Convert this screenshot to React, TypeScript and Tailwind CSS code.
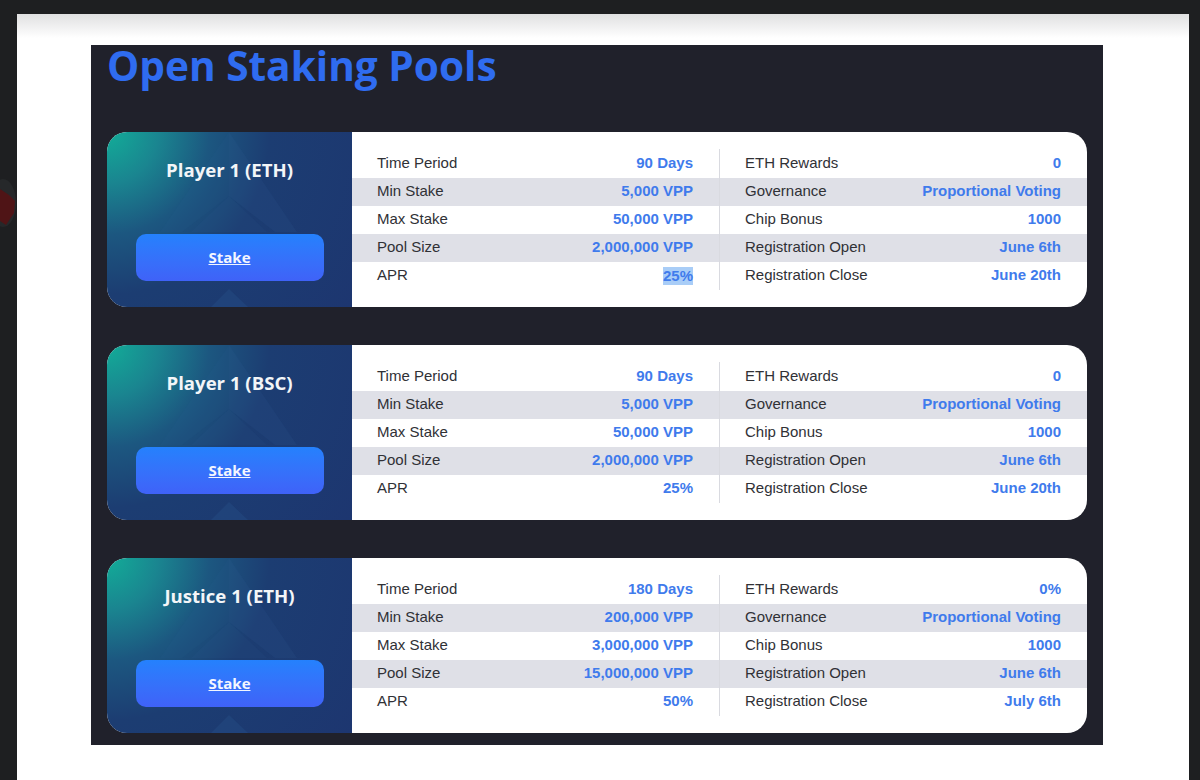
const LEFT = ["Time Period", "Min Stake", "Max Stake", "Pool Size", "APR"];
const RIGHT = ["ETH Rewards", "Governance", "Chip Bonus", "Registration Open", "Registration Close"];

type Pool = { name: string; left: string[]; right: string[]; selected?: boolean };

const POOLS: Pool[] = [
  {
    name: "Player 1 (ETH)",
    left: ["90 Days", "5,000 VPP", "50,000 VPP", "2,000,000 VPP", "25%"],
    right: ["0", "Proportional Voting", "1000", "June 6th", "June 20th"],
    selected: true,
  },
  {
    name: "Player 1 (BSC)",
    left: ["90 Days", "5,000 VPP", "50,000 VPP", "2,000,000 VPP", "25%"],
    right: ["0", "Proportional Voting", "1000", "June 6th", "June 20th"],
  },
  {
    name: "Justice 1 (ETH)",
    left: ["180 Days", "200,000 VPP", "3,000,000 VPP", "15,000,000 VPP", "50%"],
    right: ["0%", "Proportional Voting", "1000", "June 6th", "July 6th"],
  },
];

function Watermark() {
  return (
    <svg className="absolute left-0 top-0 h-[175px] w-[245px]" viewBox="0 0 245 175" fill="none">
      <path d="M122 0 L53 100 L75 100 L122 64 Z" fill="#2b5f8f" fillOpacity="0.1" />
      <path d="M122 0 L190 100 L168 100 L122 64 Z" fill="#3a6fa8" fillOpacity="0.1" />
      <path d="M122 64 L84 100 L160 100 Z" fill="#3a6fa8" fillOpacity="0.07" />
      <path d="M122 157 L104 175 L141 175 Z" fill="#3a78b0" fillOpacity="0.14" />
    </svg>
  );
}

function Row({ label, value, selected }: { label: string; value: string; selected?: boolean }) {
  return (
    <div className="flex h-7 items-center justify-between pb-px">
      <span className="text-[#303136]">{label}</span>
      <span className={selected ? "bg-[#a9cdf7] font-bold leading-[18px] text-[#3f7bec]" : "font-bold text-[#3f7bec]"}>{value}</span>
    </div>
  );
}

function Card({ pool }: { pool: Pool }) {
  return (
    <div className="flex h-[175px] overflow-hidden rounded-[20px] bg-white">
      <div className="relative flex w-[245px] shrink-0 flex-col items-center bg-[radial-gradient(circle_at_0%_0%,#12ad98_0%,#1a8590_17%,#1c5780_34%,#1c3d72_54%,#1d3670_100%)] px-7 pt-[25px]">
        <Watermark />
        <h2 className="relative font-['Open_Sans',sans-serif] text-[18.6px] font-bold leading-[26px] text-[#f3f6f8]">{pool.name}</h2>
        <a className="relative mt-[51px] flex h-[47px] w-[188px] items-center justify-center rounded-[10px] bg-gradient-to-b from-[#2481fd] to-[#3f62f8] font-['Open_Sans',sans-serif] text-[15px] font-bold text-[#f3f6ff] underline underline-offset-1">
          Stake
        </a>
      </div>
      <div className="relative flex-1 pt-[18px] font-['Liberation_Sans',Arial,sans-serif] text-[15px]">
        <div className="absolute bottom-[17px] left-[367px] top-[17px] w-px bg-[#d9dae0]" />
        {[0, 1, 2, 3, 4].map((i) => (
          <div key={i} className={i % 2 === 1 ? "flex bg-[#dfe0e7]" : "flex"}>
            <div className="w-[368px] pl-[25px] pr-[27px]">
              <Row label={LEFT[i]} value={pool.left[i]} selected={pool.selected && i === 4} />
            </div>
            <div className="flex-1 pl-[25px] pr-[26px]">
              <Row label={RIGHT[i]} value={pool.right[i]} />
            </div>
          </div>
        ))}
      </div>
    </div>
  );
}

export default function App() {
  return (
    <div className="relative h-[780px] w-[1200px] overflow-hidden bg-[#1e1f21] pl-[17px] pr-[11px] pt-[14px]">
      <svg className="absolute left-0 top-[175px] h-[55px] w-[17px]" viewBox="0 0 17 55" fill="none">
        <ellipse cx="3" cy="28" rx="13" ry="24" fill="#26282a" />
        <path d="M0 14 L9 20 L15 26 L14 38 L6 50 L0 46 Z" fill="#4f1416" />
      </svg>
      <div className="h-full bg-gradient-to-b from-[#e0e0e1] via-white via-[24px] to-white pl-[74px] pr-[86px] pt-[31px]">
        <div className="h-[700px] bg-[#20212b] px-4">
          <h1 className="h-[87px] font-['Open_Sans',sans-serif] text-[40.6px] font-bold leading-[41px] text-[#2f6cf0]">Open Staking Pools</h1>
          <div className="flex flex-col gap-[38px]">
            {POOLS.map((p) => (
              <Card key={p.name} pool={p} />
            ))}
          </div>
        </div>
      </div>
    </div>
  );
}
